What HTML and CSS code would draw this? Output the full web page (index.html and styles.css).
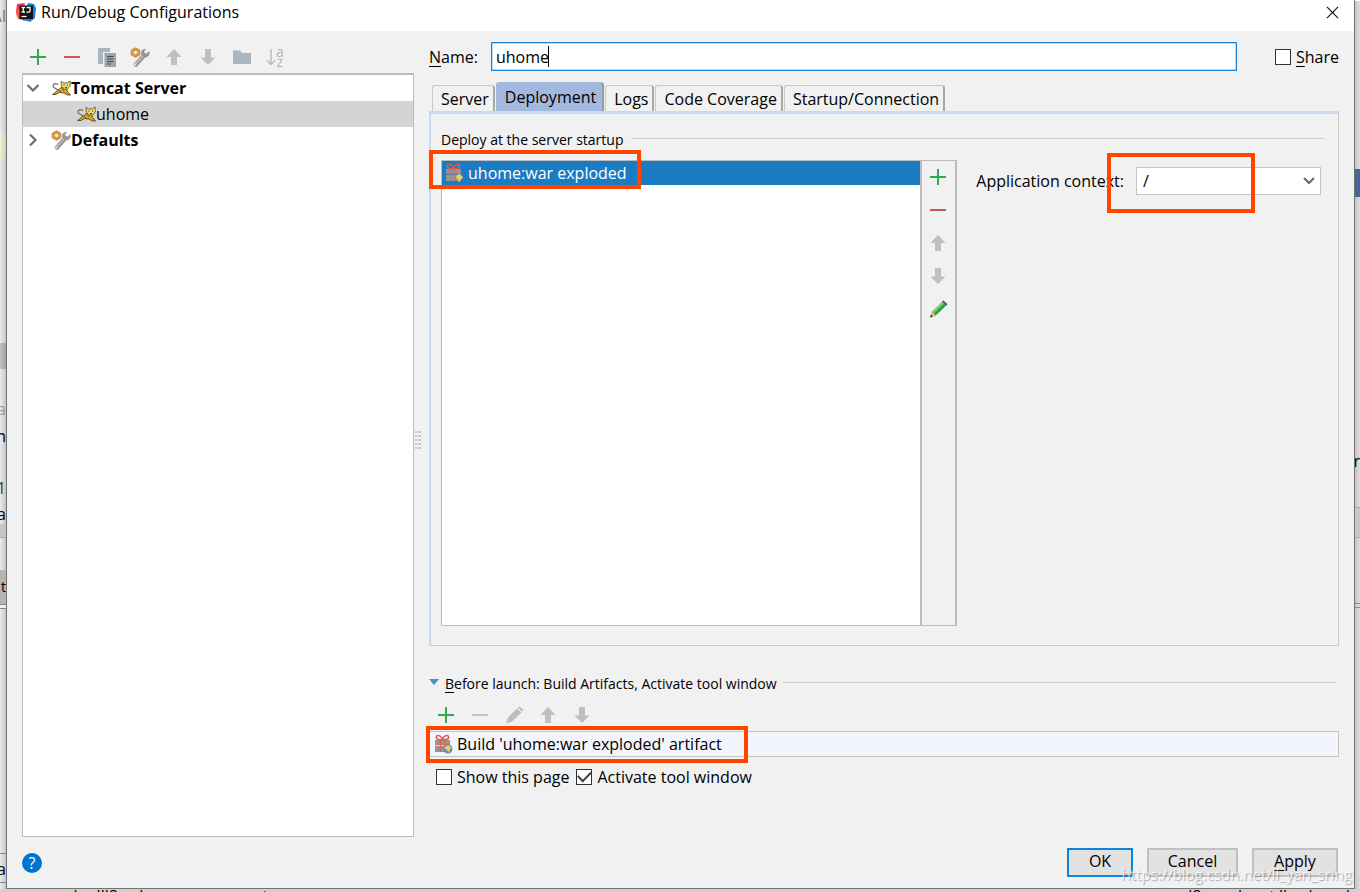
FILE: index.html
```html
<!DOCTYPE html>
<html lang="en">
<head>
<meta charset="utf-8">
<title>Run/Debug Configurations</title>
<link rel="stylesheet" href="styles.css">
</head>
<body>
<svg class="defs" aria-hidden="true">
  <defs>
    <symbol id="plus" viewBox="0 0 20 20"><path d="M10 2v16M2 10h16" stroke="#2faa4c" stroke-width="2"/></symbol>
    <symbol id="minus" viewBox="0 0 20 20"><path d="M2 10h16" stroke="#cc5a4b" stroke-width="2"/></symbol>
    <symbol id="minus-off" viewBox="0 0 20 20"><path d="M2 10h16" stroke="#c3c3c3" stroke-width="2"/></symbol>
    <symbol id="up" viewBox="0 0 20 20"><path d="M10 2l7.500 8H13v8H7v-8H2.500z" fill="#bfbfbf"/></symbol>
    <symbol id="down" viewBox="0 0 20 20"><path d="M10 18l7.500-7.500H13V2H7v8.500H2.500z" fill="#bfbfbf"/></symbol>
    <symbol id="copy" viewBox="0 0 20 20"><path d="M2 1h12v4H7v12H2z" fill="#a9b6bd"/><path d="M8.500 6H20v14H8.500z" fill="#9aa7b0"/><path d="M11 9.500h6.500M11 12h6.500M11 14.500h6.500M11 17h4" stroke="#444c52" stroke-width="1"/></symbol>
    <symbol id="wrench" viewBox="0 0 20 20">
      <path d="M6 17.500L13.500 9" stroke="#96989b" stroke-width="4.500" stroke-linecap="round"/>
      <path d="M19.500 4l-3.200 2.700-2.400-1.600L16 2c-3-.4-5.500 1.500-4.800 4.700.6 2.700 3.300 4 5.800 3.200 2.200-.8 3.300-3.600 2.500-5.900z" fill="#929598"/>
      <path d="M5.300 17.200l7.900-8.500" stroke="#bcbec0" stroke-width="1.300"/>
      <circle cx="5.300" cy="17.500" r="1" fill="#eee"/>
      <path d="M5.500 1.200l4 2.200v4.200l-4 2.200-4-2.200V3.400z" fill="#e6b873" stroke="#d48b2d" stroke-width="1.600"/>
      <circle cx="5.500" cy="5.500" r="2.100" fill="#f2f2f2" stroke="#b87624" stroke-width=".7"/>
    </symbol>
    <symbol id="folder" viewBox="0 0 20 20"><path d="M1 3.500h7l2 2.500h9v11H1z" fill="#a9b7c0"/></symbol>
    <symbol id="cat" viewBox="0 0 20 20">
      <path d="M9 14C7 10 2 11 2 8c0-2.500 4-3.500 5-1" fill="none" stroke="#77705a" stroke-width="1.200"/>
      <path d="M1.500 16.500H5l3-2 5 .5 3.500 2h3l-3.500-4V9h-5l-5 4-2.500 2z" fill="#dca71f" stroke="#3e3517" stroke-width=".8"/>
      <path d="M10 3.500l3 1.500h3l3.200-2V8l-2.700 3h-3L10.500 8.500z" fill="#efdf77" stroke="#6d5d25" stroke-width=".9"/>
      <path d="M13 6.500v1.200M16.500 6.500v1.200M14 9.500h2" stroke="#443a17" stroke-width="1"/>
      <path d="M8 12l2 2m1-4l2 3" stroke="#6d501b" stroke-width=".9"/>
    </symbol>
    <symbol id="gift" viewBox="0 0 20 20">
      <path d="M2 6h15v5H2zM2 12h15v6H2z" fill="#949798"/>
      <path d="M9.500 5.500C6 6 2.500 5 3.500 2.500S9 2.500 9.500 5.500zm0 0c3.500.5 7-.5 6-3s-5.500 0-6 3z" fill="none" stroke="#d95b51" stroke-width="1.500"/>
      <path d="M2 10.500h15M7.500 6v12M11.500 6v12" stroke="#e5655a" stroke-width="1.400"/>
    </symbol>
    <symbol id="globe" viewBox="0 0 10 10"><circle cx="5" cy="5" r="4.500" fill="#5a91bd"/><path d="M1 4l4-3 4 3-2 1-1 4-2-3z" fill="#f3cf61"/></symbol>
    <symbol id="bulb" viewBox="0 0 10 10"><path d="M3 2l3-1 3 3-1 2-2 1v2L4 8 4 6 2 5z" fill="#f2cf59"/></symbol>
    <symbol id="pencil" viewBox="0 0 20 20"><path d="M2 18.500l2-6L14 2.500l4.500 4L8 16.500z" fill="#5abf63"/><path d="M4 12.500l4 4L2 18.500z" fill="#f1b66c"/><path d="M2 18.500l1-3 2 2z" fill="#3d3d3d"/><path d="M14 2.500l1.200-1 4.300 3.800-1 1.200z" fill="#454545"/><path d="M6.800 15.300L17.300 5.400" stroke="#2f8f3c" stroke-width="1.600"/><path d="M5 12.500L14.500 3.500" stroke="#92df98" stroke-width="1.200"/></symbol>
    <symbol id="pencil-off" viewBox="0 0 20 20"><path d="M2 18.500l2-6L13 3.500l4.500 4L8 16.500zM14 2.500l1.500-1 4 3.500-1.500 1.500z" fill="#bcbcbc"/></symbol>
    <symbol id="open" viewBox="0 0 20 20"><path d="M4.500 7L10 12.500 15.500 7" fill="none" stroke="#6e6e6e" stroke-width="2.200"/></symbol>
    <symbol id="closed" viewBox="0 0 20 20"><path d="M7 4.500l5.500 5.500L7 15.500" fill="none" stroke="#6e6e6e" stroke-width="2.200"/></symbol>
  </defs>
</svg>

<div class="desktop">
  <div class="strip strip-left" aria-hidden="true">
    <span class="frag frag-path">\l</span>
    <span class="mark mark-yellow"></span>
    <span class="mark mark-grey"></span>
    <span class="frag frag-dim">va</span>
    <span class="frag frag-n">n</span>
    <span class="frag frag-one">.1</span>
    <span class="frag frag-pa">pa</span>
    <span class="mark mark-bar"></span>
    <span class="frag frag-t">t</span>
    <span class="mark mark-sheet"></span>
    <span class="frag frag-a">a</span>
  </div>

  <main class="dialog">
    <header class="titlebar">
      <svg class="logo" viewBox="0 0 20 20" aria-hidden="true">
        <path d="M1 2l8-1-2 9-6 5-1-5z" fill="#fe2f67"/><path d="M0 8l6-1 3 11-7-1z" fill="#fb5a41"/>
        <path d="M12 1l6 1 2 4-1 10-5 4-7-2z" fill="#1683ec"/><path d="M3 16l5 3 4-2-5-3z" fill="#f2358b"/>
        <path d="M3.500 3.500h13.500v13.500H3.500z" fill="#111"/>
        <path d="M5.500 5.500h3.500M5.500 10h3.500M7.250 5.500V10M10.500 5.500h3.500V9q0 1.200-1.300 1.200H10.500" fill="none" stroke="#fff" stroke-width="1.300"/><path d="M5.500 14.500h5" stroke="#fff" stroke-width="1.300"/>
      </svg>
      <h1 class="title">Run/Debug Configurations</h1>
      <button class="close" aria-label="Close"><svg viewBox="0 0 14 14"><path d="M1 1l12 12M13 1L1 13" stroke="#111" stroke-width="1.200"/></svg></button>
    </header>

    <div class="content">
      <section class="sidebar">
        <div class="toolbar">
          <button class="tool" aria-label="Add"><svg class="icon"><use href="#plus"/></svg></button>
          <button class="tool" aria-label="Remove"><svg class="icon"><use href="#minus"/></svg></button>
          <button class="tool" aria-label="Copy"><svg class="icon"><use href="#copy"/></svg></button>
          <button class="tool" aria-label="Edit defaults"><svg class="icon"><use href="#wrench"/></svg></button>
          <button class="tool" aria-label="Move up"><svg class="icon"><use href="#up"/></svg></button>
          <button class="tool" aria-label="Move down"><svg class="icon"><use href="#down"/></svg></button>
          <button class="tool" aria-label="New folder"><svg class="icon"><use href="#folder"/></svg></button>
          <button class="tool sort" aria-label="Sort"><svg class="sort-arrow" viewBox="0 0 10 20"><path d="M5 2v15M1 13.500l4 4 4-4" fill="none" stroke="#b9b9b9" stroke-width="1.400"/></svg><span class="az"><span>a</span><span>z</span></span></button>
        </div>
        <ul class="tree" role="tree">
          <li class="node" role="treeitem" aria-expanded="true"><svg class="icon twist"><use href="#open"/></svg><svg class="icon"><use href="#cat"/></svg><b>Tomcat Server</b></li>
          <li class="node child selected" role="treeitem" aria-selected="true"><svg class="icon"><use href="#cat"/></svg><span>uhome</span></li>
          <li class="node" role="treeitem" aria-expanded="false"><svg class="icon twist"><use href="#closed"/></svg><svg class="icon"><use href="#wrench"/></svg><b>Defaults</b></li>
        </ul>
      </section>

      <div class="splitter" aria-hidden="true"><span class="grip"></span></div>

      <section class="editor">
        <div class="name-row">
          <label for="name"><u>N</u>ame:</label>
          <div class="name-field"><input id="name" class="name-input" type="text" value="uhome"><span class="caret"></span></div>
          <label class="check share"><input type="checkbox" class="box"><span><u>S</u>hare</span></label>
        </div>

        <div class="tabs" role="tablist">
          <button class="tab" role="tab">Server</button>
          <button class="tab active" role="tab" aria-selected="true">Deployment</button>
          <button class="tab" role="tab">Logs</button>
          <button class="tab" role="tab">Code Coverage</button>
          <button class="tab" role="tab">Startup/Connection</button>
        </div>

        <div class="panel" role="tabpanel">
          <h2 class="group-title"><span>Deploy at the server startup</span></h2>
          <div class="deploy">
            <div class="artifacts">
              <div class="artifact"><span class="stack"><svg class="icon"><use href="#gift"/></svg><svg class="overlay"><use href="#bulb"/></svg></span><span>uhome:war exploded</span></div>
              <span class="callout callout-artifact"></span>
            </div>
            <div class="side-tools">
              <button class="tool" aria-label="Add artifact"><svg class="icon"><use href="#plus"/></svg></button>
              <button class="tool" aria-label="Remove artifact"><svg class="icon"><use href="#minus"/></svg></button>
              <button class="tool" aria-label="Up"><svg class="icon"><use href="#up"/></svg></button>
              <button class="tool" aria-label="Down"><svg class="icon"><use href="#down"/></svg></button>
              <button class="tool" aria-label="Edit artifact"><svg class="icon"><use href="#pencil"/></svg></button>
            </div>
            <div class="context">
              <label for="context">Application context:</label>
              <div class="combo">
                <select id="context" class="context-select"><option>/</option></select>
                <svg class="chevron" viewBox="0 0 14 10"><path d="M2 2l5 5 5-5" fill="none" stroke="#666" stroke-width="2"/></svg>
                <span class="callout callout-context"></span>
              </div>
            </div>
          </div>
        </div>

        <div class="before">
          <h2 class="group-title"><svg class="triangle" viewBox="0 0 10 6"><path d="M0 0h10L5 6z" fill="#3f94c8"/></svg><span><u>B</u>efore launch: Build Artifacts, Activate tool window</span></h2>
          <div class="toolbar task-tools">
            <button class="tool" aria-label="Add task"><svg class="icon"><use href="#plus"/></svg></button>
            <button class="tool" aria-label="Remove task"><svg class="icon"><use href="#minus-off"/></svg></button>
            <button class="tool" aria-label="Edit task"><svg class="icon"><use href="#pencil-off"/></svg></button>
            <button class="tool" aria-label="Task up"><svg class="icon"><use href="#up"/></svg></button>
            <button class="tool" aria-label="Task down"><svg class="icon"><use href="#down"/></svg></button>
          </div>
          <div class="tasks"><span class="stack"><svg class="icon"><use href="#gift"/></svg><svg class="overlay"><use href="#globe"/></svg></span><span>Build 'uhome:war exploded' artifact</span><span class="callout callout-task"></span></div>
          <div class="checks">
            <label class="check"><input type="checkbox" class="box"><span>Show this page</span></label>
            <label class="check"><input type="checkbox" class="box" checked><span>Activate tool window</span></label>
          </div>
        </div>
      </section>
    </div>

    <footer class="footer">
      <button class="help" aria-label="Help">?</button>
      <button class="btn btn-ok">OK</button>
      <button class="btn btn-cancel">Cancel</button>
      <button class="btn btn-apply"><u>A</u>pply</button>
    </footer>
  </main>

  <div class="strip strip-right" aria-hidden="true">
    <span class="mark mark-blue"></span>
    <span class="frag frag-r">r</span>
    <span class="mark mark-panel"></span>
    <span class="mark mark-sheet-r"></span>
  </div>
  <div class="strip-bottom" aria-hidden="true"><span>uncaockedll8.ockaosnoanecessot</span><span>l8nsool ccst ll osl onnl</span></div>
  <div class="watermark">https://blog.csdn.net/li_yan_sring</div>
</div>
</body>
</html>
```

FILE: styles.css
```css
* { box-sizing: border-box; }
body {
  margin: 0;
  font: 16px/20px "Open Sans", "Noto Sans", sans-serif;
  color: #000;
  background: #dcdcdc;
}
button, input, select { font: inherit; color: inherit; margin: 0; }
button { padding: 0; border: 0; background: none; }
h1, h2, ul { margin: 0; padding: 0; font-size: inherit; font-weight: 400; }
u { text-underline-offset: 3px; }
.defs { position: absolute; width: 0; height: 0; }
.icon { display: block; width: 20px; height: 20px; flex: none; }

.desktop {
  position: relative;
  display: grid;
  grid-template-columns: 6px 1fr 5px;
  grid-template-rows: 1fr 3px;
  height: 100vh;
  overflow: hidden;
}

/* Editor window behind the dialog */
.strip { display: flex; flex-direction: column; overflow: hidden; }
.strip-left { align-items: stretch; background: linear-gradient(90deg, #ececec, #c4c4c4); }
.strip-right { background: linear-gradient(90deg, #c4c4c4, #dedede); border-top: 1px solid #fff; }
.frag, .mark { display: block; flex: none; white-space: nowrap; }
.frag { display: flex; height: 20px; justify-content: flex-end; }
.frag-path { margin-top: 6px; color: #777; }
.mark-yellow { margin-top: 107px; height: 26px; background: linear-gradient(90deg, #f1f0d5, #cfceb8); }
.mark-grey { margin-top: 184px; height: 26px; background: linear-gradient(90deg, #c2c2c2, #a0a0a0); }
.frag-dim { margin-top: 30px; color: #999; }
.frag-n { margin-top: 7px; }
.frag-one { margin-top: 32px; color: #333; }
.frag-pa { margin-top: 6px; }
.mark-bar { height: 14px; background: #c6c6c6; border-bottom: 1px solid #aaa; }
.frag-t { margin-top: 32px; height: 34px; line-height: 34px; background: #b4b4b4; font-size: 14px; }
.mark-sheet { height: 5px; border: solid #888; border-width: 1px 0; background: #eee; }
.frag-a { margin-top: 244px; height: 30px; line-height: 30px; border: solid #888; border-width: 1px 0; }
.mark-blue { margin-top: 168px; height: 28px; background: #4a639b; }
.frag-r { margin-top: 254px; height: 24px; }
.mark-panel { margin-top: 32px; height: 31px; background: #c9c9c9; border: solid #aaa; border-width: 1px 0; }
.mark-sheet-r { margin-top: 65px; height: 5px; border: solid #888; border-width: 1px 0; }
.strip-bottom {
  grid-column: 1 / -1;
  display: flex;
  justify-content: space-between;
  padding: 0 10px 0 20px;
  overflow: hidden;
  line-height: 14px;
  background: #cfcfcf;
}

.dialog {
  display: flex;
  flex-direction: column;
  min-width: 0;
  background: #f1f1f1;
  border: solid #737373;
  border-width: 0 1px 1px;
}
.titlebar { display: flex; align-items: center; gap: 5px; height: 31px; padding: 0 15px 7px 9px; background: #fff; }
.logo { width: 20px; height: 20px; }
.title { flex: 1; }
.close { width: 13px; height: 13px; }
.close svg { display: block; }

.content { flex: 1; display: flex; min-height: 0; padding: 11px 15px 0; }
.sidebar { width: 392px; display: flex; flex-direction: column; }
.toolbar { display: flex; align-items: center; gap: 14px; }
.sidebar .toolbar { height: 31px; padding: 0 6px 1px; }
.tool { display: block; height: 20px; }
.sort { display: flex; }
.sort-arrow { width: 10px; height: 20px; }
.az { display: flex; flex-direction: column; font-size: 14px; line-height: 10px; color: #b4b4b4; }
.tree { flex: 1; list-style: none; background: #fff; border: 1px solid #bcbcbc; border-top-width: 2px; }
.node { display: flex; align-items: center; height: 26px; }
.node b { font-weight: 700; }
.twist { margin-right: 8px; }
.child { padding-left: 53px; }
.selected { background: #d4d4d4; }
.splitter { width: 15px; display: flex; align-items: center; padding-left: 1px; }
.grip { width: 6px; height: 18px; background: repeating-linear-gradient(90deg, transparent 0 2px, #f1f1f1 2px 3px, transparent 3px 5px), repeating-linear-gradient(#c8c8c8 0 2px, transparent 2px 4px); }

.editor { flex: 1; min-width: 0; display: flex; flex-direction: column; }
.name-row { display: flex; align-items: center; gap: 13px; }
.name-field { position: relative; flex: 1; margin-right: 25px; }
.name-input { display: block; width: 100%; height: 29px; padding: 0 4px; background: #fff; border: 1px solid #1883d7; outline: 0; box-shadow: inset 0 0 0 1px #b9d9f3; }
.caret { position: absolute; left: 57px; top: 4px; width: 1px; height: 21px; background: #000; }
.check { display: flex; align-items: center; gap: 5px; white-space: nowrap; }
.box { appearance: none; width: 16px; height: 16px; background: #fff; border: 1px solid #333; display: grid; place-items: center; }
.box:checked::before { content: ""; width: 11px; height: 6px; margin-bottom: 4px; border: solid #444; border-width: 0 0 2px 2px; transform: rotate(-45deg); }

.tabs { display: flex; align-items: flex-end; gap: 1px; margin-top: 11px; padding-left: 3px; height: 29px; }
.tab { height: 26px; padding: 0 4px 0 8px; border: 1px solid #c8c8c8; border-right: 2px solid #a8a8a8; border-bottom: 0; border-radius: 3px 3px 0 0; white-space: nowrap; }
.tab.active { height: 29px; padding-right: 6px; background: #a2b8df; border-color: #a2b8df; border-right-color: #999; }
.panel { flex: 1; display: flex; flex-direction: column; min-height: 0; padding: 16px 13px 19px 10px; border: 1px solid #c8c8c8; border-top: 3px solid #c8daf0; border-left: 2px solid #c8daf0; }
.group-title { display: flex; align-items: center; gap: 8px; font-size: 14px; line-height: 20px; white-space: nowrap; }
.group-title::after { content: ""; flex: 1; height: 1px; margin-bottom: 4px; background: #cfcfcf; }
.deploy { flex: 1; display: flex; margin-top: 10px; }
.artifacts { position: relative; flex: 1; border: 1px solid #bcbcbc; background: #fff; min-width: 0; }
.artifact { display: flex; align-items: center; gap: 4px; height: 24px; padding-left: 2px; background: #1b7bc3; color: #fff; }
.stack { position: relative; flex: none; }
.overlay { position: absolute; right: 0; bottom: 0; width: 10px; height: 10px; }
.side-tools { width: 36px; padding: 6px; display: flex; flex-direction: column; gap: 13px; border: solid #bcbcbc; border-width: 1px 2px 1px 1px; }
.context { display: flex; gap: 12px; align-items: center; align-self: flex-start; padding: 7px 4px 0 19px; }
.combo { position: relative; width: 185px; }
.context-select { display: block; width: 100%; height: 28px; padding: 0 6px; appearance: none; background: #fff; border: 1px solid #c6c6c6; border-radius: 0; }
.chevron { position: absolute; right: 5px; top: 9px; width: 14px; height: 10px; }
.callout { position: absolute; border: 4px solid #ff4500; pointer-events: none; }
.callout-artifact { left: -13px; top: -11px; width: 212px; height: 39px; }
.callout-context { left: -29px; top: -14px; width: 148px; height: 60px; }
.callout-task { left: -4px; top: -6px; width: 322px; height: 37px; }

.before { margin-top: 28px; padding-bottom: 50px; }
.before .group-title { gap: 6px; padding-right: 3px; }
.triangle { width: 10px; height: 6px; margin-bottom: 4px; }
.task-tools { height: 20px; margin: 11px 0 6px; padding-left: 7px; }
.tasks { position: relative; display: flex; align-items: center; gap: 4px; height: 26px; padding-left: 3px; background: #f2f5fb; border: 1px solid #c3c3c3; }
.checks { display: flex; gap: 7px; padding-left: 7px; margin-top: 10px; }

.footer { display: flex; gap: 14px; align-items: center; height: 51px; padding: 0 16px 0 15px; }
.help { width: 20px; height: 20px; margin-right: auto; border-radius: 10px; background: #0073d1; color: #fff; }
.btn { height: 29px; border: 2px solid #c0c0c0; background: #e2e2e2; padding-bottom: 3px; }
.btn-ok { width: 66px; border-color: #0e84df; }
.btn-cancel { width: 91px; }
.btn-apply { width: 86px; }
.watermark { position: absolute; right: 8px; bottom: 8px; font-size: 15px; color: rgba(255, 255, 255, .7); text-shadow: 1px 1px 1px rgba(0, 0, 0, .3); pointer-events: none; }
```
